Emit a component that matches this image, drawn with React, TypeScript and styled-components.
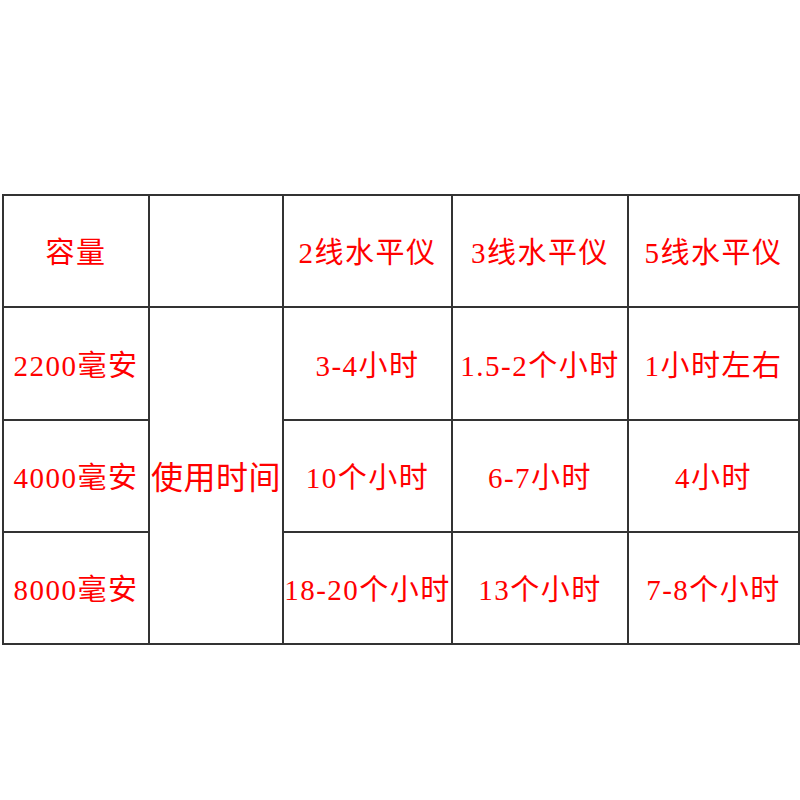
import React from "react";
import styled, { createGlobalStyle } from "styled-components";

const Global = createGlobalStyle`
  html, body { margin: 0; padding: 0; background: #ffffff; }
  body { width: 800px; height: 800px; overflow: hidden; }
`;

const Page = styled.div`
  padding: 194px 2px 0 2px;
`;

const Table = styled.table`
  border-collapse: collapse;
  table-layout: fixed;
  width: 796px;
`;

const Row = styled.tr<{ $h: number }>`
  height: ${(p) => p.$h}px;
`;

const Cell = styled.td<{ $big?: boolean }>`
  border: 2px solid #333333;
  padding: 5px 0 0 0;
  text-align: center;
  vertical-align: middle;
  color: #ff0000;
  font-family: "Liberation Serif", "Noto Sans CJK SC", serif;
  font-size: ${(p) => (p.$big ? 32 : 29)}px;
  letter-spacing: ${(p) => (p.$big ? 0.5 : 1.5)}px;
  white-space: nowrap;
  overflow: visible;
  line-height: 1;
`;

const widths = [146, 134, 169, 176, 171];

const rows: string[][] = [
  ["容量", "", "2线水平仪", "3线水平仪", "5线水平仪"],
  ["2200毫安", "", "3-4小时", "1.5-2个小时", "1小时左右"],
  ["4000毫安", "", "10个小时", "6-7小时", "4小时"],
  ["8000毫安", "", "18-20个小时", "13个小时", "7-8个小时"],
];

export default function App() {
  return (
    <Page>
      <Global />
      <Table>
        <colgroup>
          {widths.map((w, i) => (
            <col key={i} style={{ width: w }} />
          ))}
        </colgroup>
        <tbody>
          <Row $h={112}>
            {rows[0].map((t, i) => (
              <Cell key={i}>{t}</Cell>
            ))}
          </Row>
          <Row $h={113}>
            <Cell>{rows[1][0]}</Cell>
            <Cell rowSpan={3} $big>
              使用时间
            </Cell>
            <Cell>{rows[1][2]}</Cell>
            <Cell>{rows[1][3]}</Cell>
            <Cell>{rows[1][4]}</Cell>
          </Row>
          {rows.slice(2).map((r, ri) => (
            <Row $h={112} key={ri}>
              <Cell>{r[0]}</Cell>
              <Cell>{r[2]}</Cell>
              <Cell>{r[3]}</Cell>
              <Cell>{r[4]}</Cell>
            </Row>
          ))}
        </tbody>
      </Table>
    </Page>
  );
}
